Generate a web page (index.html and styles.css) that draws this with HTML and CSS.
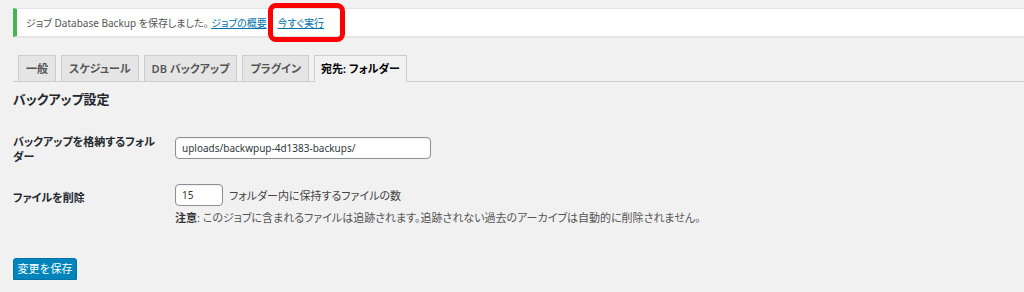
FILE: index.html
```html
<!DOCTYPE html>
<html lang="ja">
<head>
    <meta charset="UTF-8">
    <meta name="viewport" content="width=device-width, initial-scale=1.0">
    <title>BackWPup: ジョブ編集</title>
    <link rel="stylesheet" href="styles.css">
</head>
<body>
    <div class="wrap">
        <div class="notice">
            <p>ジョブ Database Backup を保存しました。 <a href="#">ジョブの概要</a> | <a href="#">今すぐ実行</a></p>
            <span class="highlight"></span>
        </div>

        <div class="nav-tabs">
            <a class="nav-tab" href="#">一般</a>
            <a class="nav-tab" href="#">スケジュール</a>
            <a class="nav-tab" href="#">DB バックアップ</a>
            <a class="nav-tab" href="#">プラグイン</a>
            <a class="nav-tab active" href="#">宛先: フォルダー</a>
        </div>

        <h3 class="section-title">バックアップ設定</h3>

        <div class="form-table">
            <div class="form-row">
                <label class="form-label" for="backupdir">バックアップを格納するフォルダー</label>
                <div class="form-field">
                    <input type="text" id="backupdir" class="regular-text" value="uploads/backwpup-4d1383-backups/">
                </div>
            </div>
            <div class="form-row">
                <label class="form-label" for="maxfiles">ファイルを削除</label>
                <div class="form-field">
                    <div class="inline-field">
                        <input type="text" id="maxfiles" class="small-text" value="15">
                        <span>フォルダー内に保持するファイルの数</span>
                    </div>
                    <p class="description"><strong>注意</strong>: このジョブに含まれるファイルは追跡されます。追跡されない過去のアーカイブは自動的に削除されません。</p>
                </div>
            </div>
        </div>

        <button class="button-primary">変更を保存</button>
    </div>
</body>
</html>
```

FILE: styles.css
```css
body {
    font-family: "Noto Sans", "Noto Sans CJK JP", sans-serif;
    font-feature-settings: "palt";
    font-size: 11px;
    background-color: #f1f1f1;
    color: #444444;
    margin: 0;
    padding: 0;
}

.wrap {
    padding: 8px 0 0 13px;
}

/* saved notice */
.notice {
    position: relative;
    background-color: #ffffff;
    border: 1px solid #e2e4e7;
    border-left: 4px solid #46b450;
    border-right: none;
    box-shadow: 0 1px 1px rgba(0, 0, 0, 0.04);
    height: 27px;
    display: flex;
    align-items: center;
    padding-left: 9px;
}

.notice p {
    margin: 0;
    font-size: 10px;
    color: #555555;
}

.notice a {
    color: #0073aa;
}

.highlight {
    position: absolute;
    left: 251px;
    top: -6px;
    width: 67px;
    height: 29px;
    border: 5px solid #ff0000;
    border-radius: 8px;
}

/* tabs */
.nav-tabs {
    display: flex;
    gap: 5px;
    margin-top: 18px;
    padding-left: 5px;
    border-bottom: 1px solid #cccccc;
}

.nav-tab {
    display: block;
    height: 25px;
    line-height: 25px;
    padding: 0 7px;
    margin-bottom: -1px;
    background-color: #e5e5e5;
    border: 1px solid #cccccc;
    border-bottom: none;
    color: #555555;
    font-weight: 600;
    font-size: 11px;
    text-decoration: none;
}

.nav-tab.active {
    background-color: #f1f1f1;
    color: #000000;
    height: 26px;
    padding: 0 6px;
}

.section-title {
    margin: 7px 0 0;
    font-size: 13px;
    font-weight: 700;
    color: #23282d;
}

/* form rows */
.form-table {
    margin-top: 26px;
}

.form-row {
    display: grid;
    grid-template-columns: 162px 1fr;
    margin-bottom: 20px;
}

.form-label {
    font-weight: 600;
    color: #23282d;
    font-size: 11px;
    line-height: 15px;
    padding-right: 12px;
}

.form-row:nth-child(2) .form-label {
    padding-top: 6px;
}

.form-field input {
    font-family: inherit;
    font-size: 10px;
    color: #32373c;
    border: 1px solid #8c8f94;
    border-radius: 4px;
    background-color: #ffffff;
    box-sizing: border-box;
    padding: 0 6px;
    box-shadow: inset 0 1px 2px rgba(0, 0, 0, 0.07);
}

.regular-text {
    display: block;
    width: 256px;
    height: 22px;
    margin-top: 3px;
}

.small-text {
    width: 48px;
    height: 22px;
}

.inline-field {
    display: flex;
    align-items: center;
    gap: 6px;
}

.description {
    margin: 3px 0 0;
    color: #555555;
}

.description strong {
    font-weight: 600;
    color: #333333;
}

.button-primary {
    display: block;
    margin-top: 33px;
    background-color: #0085ba;
    border: 1px solid #0073aa;
    border-radius: 3px;
    color: #ffffff;
    font-family: inherit;
    font-size: 11px;
    line-height: 20px;
    height: 22px;
    width: 64px;
    padding: 0;
    box-shadow: 0 1px 0 #006799;
}
```
